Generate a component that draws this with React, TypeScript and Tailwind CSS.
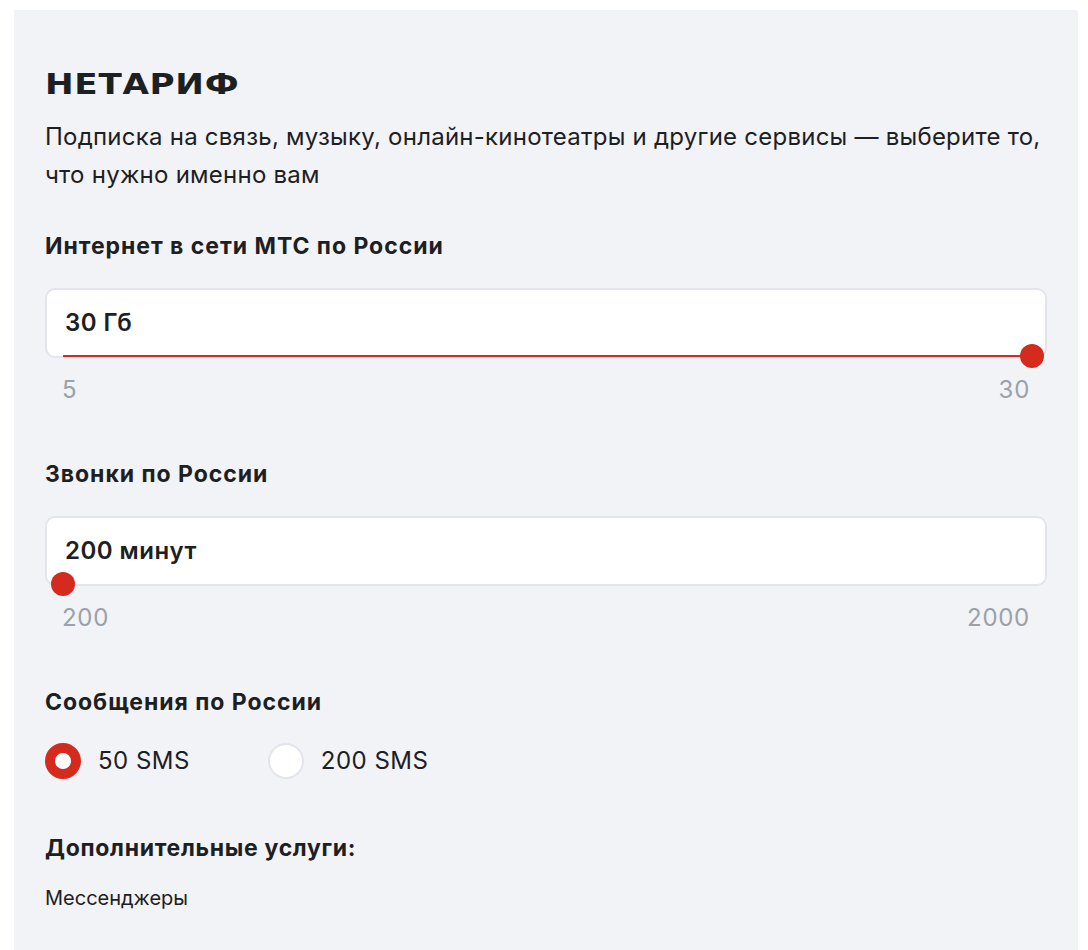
import { useState } from 'react';

type SliderProps = {
  label: string;
  value: number;
  min: number;
  max: number;
  unit: string;
  className?: string;
};

function TariffSlider({ label, value, min, max, unit, className }: SliderProps) {
  const pct = ((value - min) / (max - min)) * 100;

  return (
    <div className={className}>
      <div className="text-[23px] leading-[28px] font-bold tracking-[0.042em] text-[#1d2023]">{label}</div>
      <div className="relative mt-[28px] h-[70px] rounded-[10px] border-2 border-[#e2e5eb] bg-white">
        <div className="flex h-full items-center pl-[18px] text-[24px] font-semibold tracking-[0.02em] text-[#1d2023]">
          {value} {unit}
        </div>
        <div className="absolute left-[16px] right-[13px] bottom-[-1px] h-[2px]">
          <div className="h-full bg-[#d52b1e]" style={{ width: `${pct}%` }} />
          <div
            className="absolute top-1/2 h-[24px] w-[24px] -translate-x-1/2 -translate-y-1/2 rounded-full bg-[#d52b1e]"
            style={{ left: `${pct}%` }}
          />
        </div>
      </div>
      <div className="mt-[18px] flex justify-between pl-[17px] pr-[17px] text-[24px] leading-[28px] tracking-[0.03em] text-[#9ba1a9]">
        <span>{min}</span>
        <span>{max}</span>
      </div>
    </div>
  );
}

function App() {
  const [sms, setSms] = useState<'50' | '200'>('50');

  return (
    <div
      className="min-h-screen bg-white pt-[10px] pl-[14px]"
      style={{ fontFamily: 'Inter, "Noto Sans", sans-serif' }}
    >
      <div className="w-[1064px] min-h-[940px] bg-[#f2f3f7] pt-[60px] px-[31px] text-[#1d2023]">
        <h1
          className="inline-block origin-left scale-x-[1.18] text-[29px] leading-[28px] font-black tracking-[0.02em] text-[#1d2023]"
          style={{ fontFamily: '"DejaVu Sans", sans-serif' }}
        >
          НЕТАРИФ
        </h1>
        <p className="mt-[18px] text-[24px] leading-[38px] tracking-[0.01em] text-[#1d2023]">
          Подписка на связь, музыку, онлайн-кинотеатры и другие сервисы — выберите то, что нужно именно вам
        </p>

        <TariffSlider
          className="mt-[38px]"
          label="Интернет в сети МТС по России"
          value={30}
          min={5}
          max={30}
          unit="Гб"
        />

        <TariffSlider
          className="mt-[56px]"
          label="Звонки по России"
          value={200}
          min={200}
          max={2000}
          unit="минут"
        />

        <div className="mt-[56px] text-[23px] leading-[28px] font-bold tracking-[0.042em]">Сообщения по России</div>
        <div className="mt-[27px] flex items-center gap-[78px]">
          {(['50', '200'] as const).map((opt) => (
            <button
              key={opt}
              onClick={() => setSms(opt)}
              className="flex items-center gap-[17px] text-[24px] tracking-[0.02em] text-[#1d2023]"
            >
              <span
                className={
                  sms === opt
                    ? 'h-[36px] w-[36px] rounded-full border-[10px] border-[#d52b1e] bg-white'
                    : 'h-[36px] w-[36px] rounded-full border-2 border-[#e2e5eb] bg-white'
                }
              />
              <span>{opt} SMS</span>
            </button>
          ))}
        </div>

        <div className="mt-[55px] text-[23px] leading-[28px] font-bold tracking-[0.03em]">Дополнительные услуги:</div>
        <div className="mt-[24px] text-[20px] leading-[24px]">Мессенджеры</div>
      </div>
    </div>
  );
}

export default App;
